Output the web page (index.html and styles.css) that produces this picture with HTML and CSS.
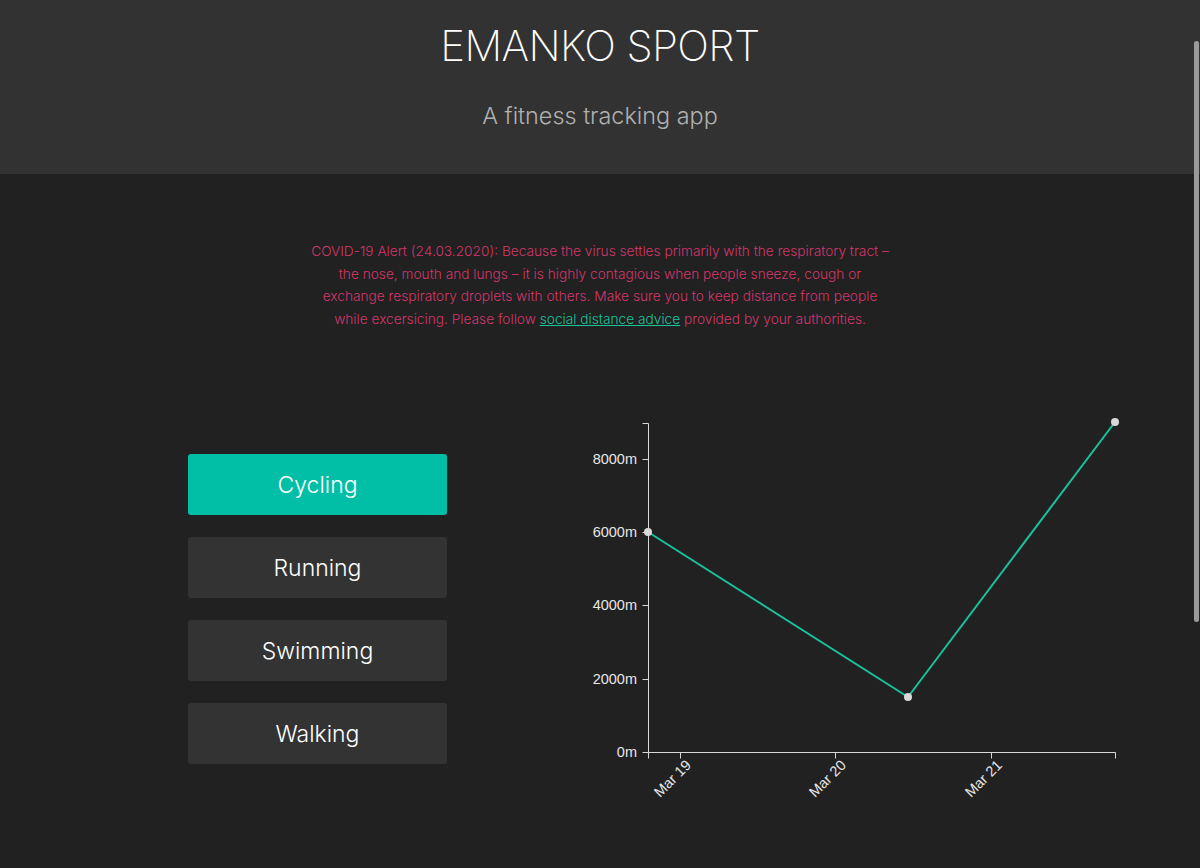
FILE: index.html
```html
<!DOCTYPE html>
<html lang="en">
<head>
<meta charset="utf-8">
<title>Emanko Sport</title>
<link rel="stylesheet" href="styles.css">
</head>
<body>
<header class="hero">
  <h1 class="hero-title">EMANKO SPORT</h1>
  <p class="hero-sub">A fitness tracking app</p>
</header>
<main class="main">
  <p class="alert">COVID-19 Alert (24.03.2020): Because the virus settles primarily with the respiratory tract – the nose, mouth and lungs – it is highly contagious when people sneeze, cough or exchange respiratory droplets with others. Make sure you to keep distance from people while excersicing. Please follow <a href="#" class="alert-link">social distance advice</a> provided by your authorities.</p>
  <section class="dashboard">
    <nav class="activities">
      <button class="activity active">Cycling</button>
      <button class="activity">Running</button>
      <button class="activity">Swimming</button>
      <button class="activity">Walking</button>
    </nav>
    <svg class="chart" width="560" height="390" viewBox="0 0 560 390">
      <g class="axis" fill="none" stroke="#d8d8d8" stroke-width="1">
        <path d="M62.5,13.5H68.5V342.5H62.5"/>
        <path d="M68.5,348.5V342.5H535.5V348.5"/>
        <line x1="62.5" y1="269.5" x2="68.5" y2="269.5"/>
        <line x1="62.5" y1="195.5" x2="68.5" y2="195.5"/>
        <line x1="62.5" y1="122.5" x2="68.5" y2="122.5"/>
        <line x1="62.5" y1="49.5" x2="68.5" y2="49.5"/>
        <line x1="100.5" y1="342.5" x2="100.5" y2="348.5"/>
        <line x1="255.5" y1="342.5" x2="255.5" y2="348.5"/>
        <line x1="411.5" y1="342.5" x2="411.5" y2="348.5"/>
      </g>
      <g class="tick-labels" fill="#e6e6e6" text-anchor="end">
        <text x="57" y="347">0m</text>
        <text x="57" y="274">2000m</text>
        <text x="57" y="200">4000m</text>
        <text x="57" y="127">6000m</text>
        <text x="57" y="54">8000m</text>
        <text transform="translate(112,356) rotate(-45)">Mar 19</text>
        <text transform="translate(267,356) rotate(-45)">Mar 20</text>
        <text transform="translate(423,356) rotate(-45)">Mar 21</text>
      </g>
      <polyline points="68,122 328,287 535,12" fill="none" stroke="#19c29a" stroke-width="2"/>
      <g fill="#d9d9d9">
        <circle cx="68" cy="122" r="4"/>
        <circle cx="328" cy="287" r="4"/>
        <circle cx="535" cy="12" r="4"/>
      </g>
    </svg>
  </section>
</main>
<div class="scrollbar"></div>
</body>
</html>
```
FILE: styles.css
```css
* { box-sizing: border-box; }
html, body {
  margin: 0;
  padding: 0;
  background: #212121;
  font-family: Inter, "Liberation Sans", sans-serif;
  color: #fff;
}
body { min-height: 868px; overflow: hidden; }
.hero {
  background: #323232;
  height: 174px;
  text-align: center;
  padding-top: 20px;
}
.hero-title {
  margin: 0;
  font-weight: 200;
  font-size: 42px;
  line-height: 52px;
  letter-spacing: -0.6px;
  color: #fff;
}
.hero-sub {
  margin: 29px 0 0;
  font-weight: 300;
  font-size: 23.4px;
  line-height: 30px;
  color: #b0b0b0;
}
.main { padding-top: 66px; }
.alert {
  width: 580px;
  margin: 0 auto;
  text-align: center;
  font-size: 13.7px;
  font-weight: 300;
  line-height: 22.6px;
  color: #d2376b;
}
.alert-link { color: #1bc49b; text-decoration: underline; }
.dashboard {
  display: flex;
  align-items: flex-start;
  padding-left: 188px;
  margin-top: 80px;
}
.activities {
  display: flex;
  flex-direction: column;
  gap: 22px;
  width: 259px;
  margin-top: 44px;
}
.activity {
  height: 61px;
  border: none;
  border-radius: 3px;
  background: #333;
  color: #fff;
  font-family: Inter, "Liberation Sans", sans-serif;
  font-weight: 300;
  font-size: 23px;
  padding: 0;
}
.activity.active { background: #00bfa6; }
.chart {
  display: block;
  margin-left: 133px;
  font-family: "Liberation Sans", Arial, sans-serif;
  font-size: 14.5px;
}
.scrollbar {
  position: fixed;
  top: 41px;
  right: 1px;
  width: 5px;
  height: 581px;
  border-radius: 3px;
  background: #9a9a9a;
}
```
